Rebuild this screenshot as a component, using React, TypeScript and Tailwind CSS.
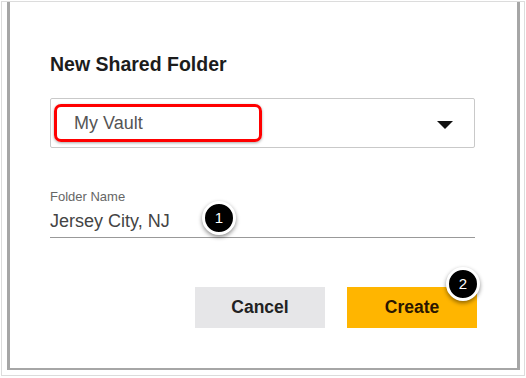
import React from "react";

function Badge({ n, className }: { n: string; className: string }) {
  return (
    <div
      className={`absolute flex h-[34px] w-[34px] items-center justify-center rounded-full border-[3px] border-white bg-black text-[15px] text-white shadow-[0_2px_4px_rgba(0,0,0,0.45)] ${className}`}
      style={{ fontFamily: '"Liberation Sans", Arial, sans-serif' }}
    >
      {n}
    </div>
  );
}

export default function App() {
  return (
    <div
      className="relative h-[378px] w-[526px] bg-white"
      style={{ fontFamily: '"Liberation Sans", Arial, sans-serif' }}
    >
      <div className="absolute left-[1px] top-[1px] flex h-[375px] w-[524px] flex-col border border-[#dcdcdc] pb-[5px] pl-[5px] pr-[4px]">
        <div className="flex flex-1 flex-col border-b-[2px] border-l-[3px] border-r-[3px] border-[#a6a6a6] bg-white pl-[40px] pr-[42px] pt-[51px]">
          <div className="text-[19.5px] font-bold leading-[22px] text-[#1c1c1c]">
            New Shared Folder
          </div>
          <div className="relative mt-[23px] flex h-[50px] items-center rounded-[2px] border border-[#c9c9c9] pl-[23px] pr-[21px]">
            <span className="flex-1 text-[18px] leading-[20px] text-[#555]">My Vault</span>
            <svg width="16" height="8" viewBox="0 0 16 8" className="mt-[3px]">
              <path d="M0 0 L16 0 L8 8 Z" fill="#111" />
            </svg>
            <div className="absolute left-[3px] top-[5px] h-[38px] w-[208px] rounded-[7px] border-[3px] border-[#f00] shadow-[0_1px_3px_rgba(0,0,0,0.35)]" />
          </div>
          <div className="mt-[42px] text-[13px] leading-[14px] text-[#666]">Folder Name</div>
          <div className="mt-[7px] border-b border-[#999] pb-[6px] text-[18px] leading-[20px] text-[#444]">
            Jersey City, NJ
          </div>
          <div className="mr-[-2px] mt-[49px] flex justify-end gap-[22px]">
            <div className="flex h-[41px] w-[130px] items-center justify-center bg-[#e6e6e8] text-[17.5px] font-bold text-[#222]">
              Cancel
            </div>
            <div className="flex h-[41px] w-[130px] items-center justify-center bg-[#ffb500] text-[17.5px] font-bold text-[#2a1600]">
              Create
            </div>
          </div>
        </div>
      </div>
      <Badge n="1" className="left-[202px] top-[201px]" />
      <Badge n="2" className="left-[446px] top-[267px]" />
    </div>
  );
}
